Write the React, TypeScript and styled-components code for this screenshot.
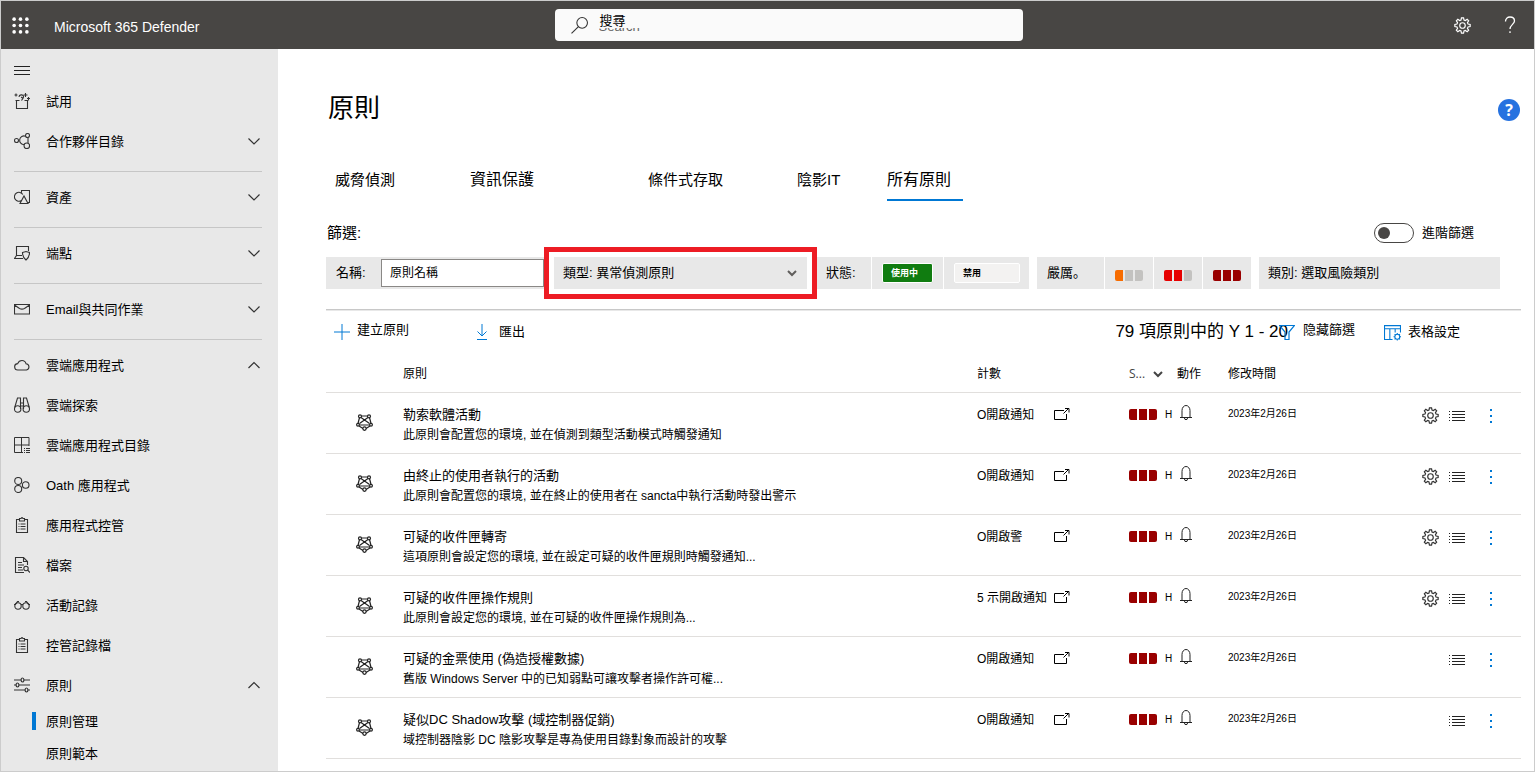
import React from "react";
import styled, { createGlobalStyle } from "styled-components";

const GlobalStyle = createGlobalStyle`
  *, *::before, *::after { box-sizing: border-box; }
  body {
    margin: 0;
    background: #fff;
    color: #000;
    font-family: "Liberation Sans", "Noto Sans CJK TC", sans-serif;
    font-size: 13px;
    line-height: 20px;
  }
  button, input { font: inherit; color: inherit; }
  button { margin: 0; padding: 0; border: 0; background: none; text-align: left; cursor: pointer; }
  a { color: inherit; text-decoration: none; }
  svg { display: block; flex: none; }
`;

const Frame = styled.div`
  display: flex;
  flex-direction: column;
  min-height: 100vh;
  border: 1px solid #ccc;
`;

const TopBar = styled.header`
  display: grid;
  grid-template-columns: 1fr minmax(200px, 468px) 1fr;
  align-items: center;
  height: 48px;
  background: #484644;
  color: #fff;
`;

const Brand = styled.div`
  display: flex;
  align-items: center;
  gap: 25px;
  padding-left: 11px;
  font-size: 14px;
`;

const BrandName = styled.span`
  padding-top: 4px;
`;

const SearchBox = styled.div`
  position: relative;
  display: flex;
  align-items: center;
  gap: 11px;
  height: 32px;
  padding: 0 16px;
  margin-right: -21px;
  margin-left: 21px;
  border-radius: 4px;
  background: #fafafa;
  color: #333;
`;

const SearchInput = styled.input`
  flex: 1;
  min-width: 0;
  height: 30px;
  padding: 2px 0 0;
  border: 0;
  outline: 0;
  background: transparent;
  &::placeholder { color: #666; opacity: 1; }
`;

const SearchLabel = styled.label`
  position: absolute;
  top: 3px;
  left: 44px;
  width: 48px;
  height: 16px;
  padding-left: 1px;
  line-height: 18px;
  background: #fafafa;
  color: #000;
`;

const TopActions = styled.div`
  display: flex;
  justify-content: flex-end;
  align-items: center;
  gap: 31px;
  padding-right: 16px;
`;

const Body = styled.div`
  display: flex;
  flex: 1;
`;

const Sidebar = styled.nav`
  flex: none;
  width: 277px;
  padding: 10px 16px 0 13px;
  background: #e8e8e8;
`;

const MenuToggle = styled.button`
  display: flex;
  align-items: center;
  width: 16px;
  height: 22px;
`;

const NavItem = styled.a`
  display: flex;
  align-items: center;
  gap: 16px;
  height: 40px;
  color: #000;
  svg { color: #333; }
`;

const NavLabel = styled.span`
  flex: 1;
  padding-top: 2px;
`;

const NavRule = styled.hr`
  height: 1px;
  margin: 10px 0 5px;
  border: 0;
  background: #c6c6c6;
`;

const SubItem = styled.a<{ $current?: boolean }>`
  display: flex;
  align-items: center;
  gap: 10px;
  height: 32px;
  padding-left: 18px;
  &::before {
    content: "";
    width: 4px;
    height: 18px;
    background: ${(p) => (p.$current ? "#0078d4" : "transparent")};
  }
  ${NavLabel} { padding-top: 2px; }
`;

const Main = styled.main`
  flex: 1;
  min-width: 0;
  padding: 40px 13px 0 48px;
`;

const TitleRow = styled.div`
  display: flex;
  align-items: center;
  justify-content: space-between;
  height: 40px;
`;

const Title = styled.h1`
  margin: 0;
  padding: 0 0 2px 2px;
  font-size: 26px;
  font-weight: 400;
  line-height: 36px;
`;

const HelpButton = styled.button`
  width: 22px;
  height: 22px;
  margin: 2px 1px 0 0;
  border-radius: 50%;
  background: #2672e0;
  color: #fff;
  font: 700 16px/22px "Open Sans", sans-serif;
  text-align: center;
`;

const Tabs = styled.div`
  display: grid;
  grid-template-columns: 135px 178px 149px 90px 76px;
  height: 44px;
  margin-top: 28px;
  padding-left: 9px;
`;

const Tab = styled.button<{ $large?: boolean; $selected?: boolean }>`
  padding-top: 4px;
  font-size: ${(p) => (p.$large ? 16 : 15)}px;
  border-bottom: 2px solid ${(p) => (p.$selected ? "#0078d4" : "transparent")};
`;

const FilterHead = styled.div`
  display: flex;
  align-items: center;
  justify-content: space-between;
  height: 20px;
  margin: 22px 47px 0 1px;
`;

const FilterTitle = styled.span`
  font-size: 15px;
`;

const Toggle = styled.label`
  display: flex;
  align-items: center;
  gap: 8px;
`;

const Switch = styled.input`
  appearance: none;
  display: flex;
  align-items: center;
  width: 40px;
  height: 20px;
  margin: 0;
  padding-left: 3px;
  border: 1px solid #484644;
  border-radius: 10px;
  background: #fff;
  &::before {
    content: "";
    width: 12px;
    height: 12px;
    border-radius: 50%;
    background: #484644;
  }
  &:checked { justify-content: flex-end; padding: 0 3px 0 0; }
`;

const Filters = styled.div`
  display: flex;
  height: 32px;
  margin: 14px 21px 0 0;
`;

const FilterGroup = styled.div<{ $gap?: number }>`
  display: flex;
  gap: 1px;
  margin-left: ${(p) => p.$gap ?? 0}px;
`;

const FilterCell = styled.div<{ $w: number; $pad?: number }>`
  display: flex;
  align-items: center;
  width: ${(p) => p.$w}px;
  padding-left: ${(p) => p.$pad ?? 10}px;
  background: #e8e8e8;
`;

const SeverityLabel = styled(FilterCell)`
  font-family: "Liberation Sans", "Noto Sans CJK JP", sans-serif;
`;

const NameField = styled.label`
  display: flex;
  align-items: center;
  width: 218px;
  padding-left: 10px;
  background: #e8e8e8;
`;

const NameText = styled.span`
  width: 45px;
`;

const NameInput = styled.input`
  width: 163px;
  height: 28px;
  padding: 0 8px;
  border: 1px solid #8a8886;
  background: #fff;
  font-size: 12px;
  &::placeholder { color: #000; opacity: 1; }
`;

const TypeFilter = styled.button`
  position: relative;
  display: flex;
  align-items: center;
  justify-content: space-between;
  width: 253px;
  margin: 0 10px;
  padding: 0 10px 0 9px;
  background: #e8e8e8;
  svg { color: #605e5c; }
  &::after {
    content: "";
    position: absolute;
    inset: -10px;
    border: 5px solid #ed1c24;
  }
`;

const StatePill = styled.button<{ $on?: boolean }>`
  width: ${(p) => (p.$on ? 51 : 66)}px;
  height: 20px;
  padding-left: 8px;
  border: 1px solid #fff;
  border-radius: 2px;
  background: ${(p) => (p.$on ? "#107c10" : "#f3f2f1")};
  color: ${(p) => (p.$on ? "#fff" : "#000")};
  font-size: 9px;
  font-weight: 700;
  line-height: 18px;
`;

const SeverityCell = styled.button`
  display: flex;
  justify-content: center;
  align-items: center;
  width: 48px;
  padding-top: 5px;
  background: #e8e8e8;
`;

const CategoryFilter = styled.button`
  flex: 1;
  margin-left: 8px;
  padding-left: 9px;
  background: #e8e8e8;
`;

const Toolbar = styled.div`
  display: flex;
  align-items: center;
  height: 45px;
  margin-top: 20px;
  padding: 0 61px 0 8px;
  border-top: 1px solid #c8c8c8;
  box-shadow: inset 0 1px 0 #e8e8e8;
`;

const Command = styled.button<{ $gap: number; $before?: number }>`
  display: flex;
  align-items: center;
  gap: ${(p) => p.$gap}px;
  margin-left: ${(p) => p.$before ?? 0}px;
`;

const Raised = styled.span`
  padding-bottom: 5px;
`;

const ResultCount = styled.span`
  margin-left: auto;
  font-size: 17px;
  white-space: nowrap;
`;

const Table = styled.table`
  width: 100%;
  border-collapse: collapse;
  table-layout: fixed;
`;

const Th = styled.th<{ $w?: number }>`
  width: ${(p) => (p.$w ? `${p.$w}px` : "auto")};
  height: 38px;
  padding: 3px 0 0;
  border-bottom: 1px solid #e1dfdd;
  font-size: 12px;
  font-weight: 400;
  text-align: left;
`;

const SortHead = styled.button`
  display: flex;
  align-items: center;
  gap: 8px;
  color: #444;
  font-family: "Open Sans", sans-serif;
`;

const Td = styled.td<{ $middle?: boolean; $top?: number }>`
  height: 61px;
  padding: ${(p) => (p.$middle ? 0 : p.$top ?? 12)}px 0 0;
  border-bottom: 1px solid #e1dfdd;
  vertical-align: ${(p) => (p.$middle ? "middle" : "top")};
`;

const Line = styled.div<{ $gap?: number }>`
  display: flex;
  align-items: center;
  gap: ${(p) => p.$gap ?? 0}px;
  height: 20px;
`;

const PolicyIcon = styled.div`
  display: flex;
  padding-left: 30px;
`;

const PolicyName = styled.a`
  display: block;
  line-height: 21px;
`;

const PolicyText = styled.div`
  font-size: 12px;
  line-height: 21px;
  white-space: nowrap;
`;

const CountText = styled.span`
  width: 77px;
  font-size: 12px;
  white-space: nowrap;
`;

const Level = styled.span`
  font-size: 10px;
`;

const DateText = styled.span`
  font-size: 10px;
`;

const RowActions = styled.div`
  display: flex;
  align-items: center;
  justify-content: flex-end;
  height: 24px;
  padding-right: 28px;
  color: #333;
`;

const RowButton = styled.button<{ $after?: number }>`
  margin-right: ${(p) => p.$after ?? 0}px;
`;

type IconProps = { size?: number; w?: number; box?: string; stroke?: number; children: React.ReactNode };

const Icon = ({ size = 16, w, box = "0 0 16 16", stroke = 1, children }: IconProps) => (
  <svg width={w ?? size} height={size} viewBox={box} fill="none" stroke="currentColor" strokeWidth={stroke} aria-hidden="true">
    {children}
  </svg>
);

const Chevron = ({ up }: { up?: boolean }) => (
  <Icon stroke={1.2}><path d={up ? "M2.500 11 8 5.500 13.500 11" : "M2.500 5.500 8 11l5.500-5.500"} /></Icon>
);

const BoldChevron = () => (
  <Icon size={10} box="0 0 10 10" stroke={2}><path d="M1 3l4 4 4-4" /></Icon>
);

const gearPath =
  "M7 .8h2l.4 2 1.300.55 1.700-1.150 1.400 1.400-1.150 1.700.55 1.300 2 .4v2l-2 .4-.55 1.300 1.150 1.700-1.400 1.400-1.700-1.150-1.300.55-.4 2H7l-.4-2-1.300-.55-1.700 1.150-1.400-1.400 1.150-1.700-.55-1.300-2-.4V7l2-.4.55-1.300L2.200 3.600l1.400-1.400 1.700 1.150L6.600 2.800z";

const Gear = ({ size = 17 }: { size?: number }) => (
  <Icon size={size} stroke={1.1}><path d={gearPath} /><circle cx="8" cy="8" r="2.600" /></Icon>
);

const icons: Record<string, React.ReactNode> = {
  trial: <Icon stroke={1.1}><path d="M2.500 7.500V15.500h11V7.500M1.500 7.500h4M10.500 7.500h4M5 4c0-2.500 4-3 4.500-.5.300 2-2.500 1.500-2 .2M9.500 3.500c.3 2-1.500 2.500-2 4M11.500 0v4M9.500 2h4M.5 2h3M2 .5v3M13 5.500h3M14.500 4v3" /></Icon>,
  partner: <Icon stroke={1.1}><circle cx="2.500" cy="7.500" r="2" /><circle cx="13.500" cy="2.500" r="2" /><circle cx="12.800" cy="12.800" r="2.800" /><path d="M11.500 3.200a4.300 4.300 0 1 0-1.300 8.300M14 4.500v5.500" /></Icon>,
  assets: <Icon stroke={1.1}><path d="M7.500 3.500v-2h8V13.500H14M6 14.500 10 7l4 7.500zM7.500 11.500A4.500 4.500 0 1 1 8.800 5.500" /></Icon>,
  endpoints: <Icon stroke={1.1}><path d="M9 13.500H.5l2-3h5.500M2.500 10.500v-9h12v4.500M8.500 7.500l3.500-1 3.500 1c0 4-1 5.500-3.500 7.500-2.500-2-3.500-3.500-3.500-7.500z" /></Icon>,
  mail: <Icon stroke={1.1}><path d="M.5 3.500h15v9.500H.5zM.5 4l5 3.500c2 1 3 1 5 0l5-3.500" /></Icon>,
  cloud: <Icon stroke={1.1}><path d="M4 13a3.200 3.200 0 0 1-.3-6.400C4.500 4.500 6 3.500 8 3.500c2.200 0 3.500 1.300 4 3.200A3.200 3.200 0 0 1 12.500 13z" /></Icon>,
  binoculars: <Icon stroke={1.1}><circle cx="3.700" cy="12" r="3.200" /><circle cx="12.300" cy="12" r="3.200" /><path d="M.7 10.500 3.500 1h3V12M15.300 10.500 12.500 1h-3V12M6.500 6h3M6.500 9h3" /></Icon>,
  catalog: <Icon><path d="M9 15.500H.5V.5h14.500V9M7.500.5v15M.5 8h14.500M10 11.500h1M12 11.500h4M10 13.500h1M12 13.500h4M10 15.500h1M12 15.500h4" /></Icon>,
  oauth: <Icon stroke={1.1}><circle cx="4.200" cy="4" r="3.500" /><circle cx="11.700" cy="8" r="3.300" /><circle cx="4.200" cy="12" r="3.500" /></Icon>,
  clipboard: <Icon stroke={1.1}><path d="M5.500 2.500h-3v13h11v-13h-3M5.500 1.500h1.500L8 .5l1 1h1.500v2.500h-5zM4.500 7h1M6.500 7h5M4.500 9.500h1M6.500 9.500h5M4.500 12h1M6.500 12h5" /></Icon>,
  file: <Icon stroke={1.1}><path d="M10 15.500H1.500V.5h8l4 4V8M9.500.5v4h4M4 5.500h4M4 8h6M4 10.500h4M4 13h5" /><circle cx="12" cy="11.500" r="2.200" /><path d="m13.500 13 2.500 2.500" /></Icon>,
  glasses: <Icon stroke={1.1}><circle cx="4" cy="9" r="3.200" /><circle cx="12" cy="9" r="3.200" /><path d="M7 7.500h2M0 7.500h1.500L3.500 4.500h1.500M16 7.500h-1.500L12.500 4.500h-1.500" /></Icon>,
  sliders: <Icon stroke={1.2}><path d="M0 3h7M10 3h6M0 8h2M5 8h11M0 13h11M14 13h2" /><ellipse cx="8.500" cy="3" rx="1.400" ry="2" /><ellipse cx="3.500" cy="8" rx="1.400" ry="2" /><ellipse cx="12.500" cy="13" rx="1.400" ry="2" /></Icon>,
};

type NavEntry = { label: string; icon: string; chevron?: "up" | "down"; rule?: boolean };

const navEntries: NavEntry[] = [
  { label: "試用", icon: "trial" },
  { label: "合作夥伴目錄", icon: "partner", chevron: "down", rule: true },
  { label: "資產", icon: "assets", chevron: "down", rule: true },
  { label: "端點", icon: "endpoints", chevron: "down", rule: true },
  { label: "Email與共同作業", icon: "mail", chevron: "down", rule: true },
  { label: "雲端應用程式", icon: "cloud", chevron: "up" },
  { label: "雲端探索", icon: "binoculars" },
  { label: "雲端應用程式目錄", icon: "catalog" },
  { label: "Oath 應用程式", icon: "oauth" },
  { label: "應用程式控管", icon: "clipboard" },
  { label: "檔案", icon: "file" },
  { label: "活動記錄", icon: "glasses" },
  { label: "控管記錄檔", icon: "clipboard" },
  { label: "原則", icon: "sliders", chevron: "up" },
];

const severityColors = { low: "#f76c00", medium: "#e60000", high: "#990000" };

const Severity = ({ level }: { level: keyof typeof severityColors }) => {
  const filled = { low: 1, medium: 2, high: 3 }[level];
  const fill = (n: number) => (n < filled ? severityColors[level] : "#c3c2c0");
  return (
    <svg width="28" height="11" viewBox="0 0 28 11" role="img" aria-label={level}>
      <path d="M2 0h6v11H2a2 2 0 0 1-2-2V2a2 2 0 0 1 2-2z" fill={fill(0)} />
      <path d="M10 0h8v11h-8z" fill={fill(1)} />
      <path d="M20 0h6a2 2 0 0 1 2 2v7a2 2 0 0 1-2 2h-6z" fill={fill(2)} />
    </svg>
  );
};

const AnomalyIcon = () => (
  <Icon size={17} box="0 0 17 17" stroke={1.2}>
    <path d="M5.500 2h6M3.500 3.500 2 9.500M13.500 3.500 15 9.500M3.500 11h10M3 12l4 2.500M14 12l-4 2.500M5 3.500l8.500 6M12 3.500l-8.500 6" stroke="#222" />
    <circle cx="4" cy="2.300" r="1.500" stroke="#222" />
    <circle cx="13" cy="2.300" r="1.500" stroke="#222" />
    <circle cx="2" cy="10.800" r="1.400" stroke="#222" />
    <circle cx="15" cy="10.800" r="1.400" stroke="#222" />
    <circle cx="8.500" cy="14.600" r="1.700" stroke="#222" />
  </Icon>
);

type Policy = { name: string; text: string; count: string; gear?: boolean };

const policies: Policy[] = [
  { name: "勒索軟體活動", text: "此原則會配置您的環境, 並在偵測到類型活動模式時觸發通知", count: "O開啟通知", gear: true },
  { name: "由終止的使用者執行的活動", text: "此原則會配置您的環境, 並在終止的使用者在 sancta中執行活動時發出警示", count: "O開啟通知", gear: true },
  { name: "可疑的收件匣轉寄", text: "這項原則會設定您的環境, 並在設定可疑的收件匣規則時觸發通知...", count: "O開啟警", gear: true },
  { name: "可疑的收件匣操作規則", text: "此原則會設定您的環境, 並在可疑的收件匣操作規則為...", count: "5 示開啟通知", gear: true },
  { name: "可疑的金票使用 (偽造授權數據)", text: "舊版 Windows Server 中的已知弱點可讓攻擊者操作許可權...", count: "O開啟通知" },
  { name: "疑似DC Shadow攻擊 (域控制器促銷)", text: "域控制器陰影 DC 陰影攻擊是專為使用目錄對象而設計的攻擊", count: "O開啟通知" },
];

const PolicyRow = ({ policy }: { policy: Policy }) => (
  <tr>
    <Td $middle><PolicyIcon><AnomalyIcon /></PolicyIcon></Td>
    <Td $top={11}>
      <PolicyName href="#">{policy.name}</PolicyName>
      <PolicyText>{policy.text}</PolicyText>
    </Td>
    <Td>
      <Line>
        <CountText>{policy.count}</CountText>
        <Icon><path d="M10 3.500H.5v9h12V7M9.500 6.500l5-5M11 1.500h4v4" stroke="#000" /></Icon>
      </Line>
    </Td>
    <Td>
      <Line $gap={8}>
        <Severity level="high" />
        <Level>H</Level>
      </Line>
    </Td>
    <Td $top={10}>
      <Line>
        <Icon w={18}><path d="M4 12.500V5.500a4 5 0 0 1 8 0V12.500M2 12.500h12M6.500 13a1.500 1.700 0 0 0 3 0" stroke="#222" /></Icon>
      </Line>
    </Td>
    <Td $top={11}><Line><DateText>2023年2月26日</DateText></Line></Td>
    <Td $top={11}>
      <RowActions>
        {policy.gear && <RowButton aria-label="設定" $after={10}><Gear /></RowButton>}
        <RowButton aria-label="清單" $after={24}>
          <Icon><path d="M3 3.500h13M3 6.500h13M3 9.500h13M3 12.500h13M0 3.500h1M0 6.500h1M0 9.500h1M0 12.500h1" stroke="#222" /></Icon>
        </RowButton>
        <RowButton aria-label="更多">
          <Icon w={4} box="0 0 4 16"><path d="M1 1h2v2H1zM1 7h2v2H1zM1 13h2v2H1z" fill="#0078d4" stroke="none" /></Icon>
        </RowButton>
      </RowActions>
    </Td>
  </tr>
);

const waffleDots = [2, 8, 14];

export default function App() {
  return (
    <>
      <GlobalStyle />
      <Frame>
        <TopBar>
          <Brand>
            <button aria-label="應用程式啟動器">
              <svg width="17" height="17" viewBox="0 0 16 16" fill="#fff">
                {waffleDots.map((y) => waffleDots.map((x) => <circle key={`${x}-${y}`} cx={x} cy={y} r="1.700" />))}
              </svg>
            </button>
            <BrandName>Microsoft 365 Defender</BrandName>
          </Brand>
          <SearchBox>
            <Icon size={17}><circle cx="10.500" cy="5.500" r="5" /><path d="M7 9 .5 15.500" /></Icon>
            <SearchInput id="search" placeholder="Search" />
            <SearchLabel htmlFor="search">搜尋</SearchLabel>
          </SearchBox>
          <TopActions>
            <button aria-label="設定"><Gear /></button>
            <button aria-label="說明">
              <Icon size={18} w={16} box="0 0 16 18" stroke={1.3}><path d="M3.500 5.500C3.500 2.500 5.500 1 8 1s4.500 1.500 4.500 4c0 3-4.500 4-4.500 8M8 15.200v1.800" /></Icon>
            </button>
          </TopActions>
        </TopBar>
        <Body>
          <Sidebar>
            <MenuToggle aria-label="功能表"><Icon><path d="M0 4.500h16M0 8.500h16M0 12.500h16" stroke="#222" /></Icon></MenuToggle>
            {navEntries.map((entry) => (
              <React.Fragment key={entry.label}>
                <NavItem href="#">
                  {icons[entry.icon]}
                  <NavLabel>{entry.label}</NavLabel>
                  {entry.chevron && <Chevron up={entry.chevron === "up"} />}
                </NavItem>
                {entry.rule && <NavRule />}
              </React.Fragment>
            ))}
            <SubItem href="#" $current><NavLabel>原則管理</NavLabel></SubItem>
            <SubItem href="#"><NavLabel>原則範本</NavLabel></SubItem>
          </Sidebar>
          <Main>
            <TitleRow>
              <Title>原則</Title>
              <HelpButton aria-label="說明">?</HelpButton>
            </TitleRow>
            <Tabs role="tablist">
              <Tab role="tab">威脅偵測</Tab>
              <Tab role="tab" $large>資訊保護</Tab>
              <Tab role="tab">條件式存取</Tab>
              <Tab role="tab">陰影IT</Tab>
              <Tab role="tab" $large $selected aria-selected>所有原則</Tab>
            </Tabs>
            <FilterHead>
              <FilterTitle>篩選:</FilterTitle>
              <Toggle><Switch type="checkbox" role="switch" />進階篩選</Toggle>
            </FilterHead>
            <Filters>
              <NameField>
                <NameText>名稱:</NameText>
                <NameInput placeholder="原則名稱" />
              </NameField>
              <TypeFilter>類型: 異常偵測原則<BoldChevron /></TypeFilter>
              <FilterGroup>
                <FilterCell $w={54} $pad={9}>狀態:</FilterCell>
                <FilterCell $w={71}><StatePill $on>使用中</StatePill></FilterCell>
                <FilterCell $w={85}><StatePill>禁用</StatePill></FilterCell>
              </FilterGroup>
              <FilterGroup $gap={8}>
                <SeverityLabel $w={67}>嚴厲。</SeverityLabel>
                <SeverityCell><Severity level="low" /></SeverityCell>
                <SeverityCell><Severity level="medium" /></SeverityCell>
                <SeverityCell><Severity level="high" /></SeverityCell>
              </FilterGroup>
              <CategoryFilter>類別: 選取風險類別</CategoryFilter>
            </Filters>
            <Toolbar>
              <Command $gap={7}>
                <Icon><path d="M8 0v16M0 8h16" stroke="#0078d4" /></Icon>
                <Raised>建立原則</Raised>
              </Command>
              <Command $gap={9} $before={65}>
                <Icon><path d="M8 0v12M3.500 7.500 8 12l4.500-4.500M3 15.500h10" stroke="#0078d4" /></Icon>
                匯出
              </Command>
              <ResultCount>79 項原則中的 Y 1 - 20</ResultCount>
              <Command $gap={8} $before={-9}>
                <Icon stroke={1.2}><path d="M.5 1.500h15L10 8v7.500H6V8z" stroke="#0078d4" /></Icon>
                <Raised>隐藏篩選</Raised>
              </Command>
              <Command $gap={7} $before={29}>
                <Icon size={17}><path d="M8 14.500H.5v-13h15V8M.5 4.500h15M5.500 4.500v10M10.500 4.500V8" stroke="#0078d4" /><circle cx="12.500" cy="12" r="2.300" stroke="#0078d4" /><path d="M12.500 8.500v1.200M12.500 14.300v1.200M9 12h1.200M14.800 12H16M10 9.500l.9.900M14.100 13.600l.9.900M15 9.500l-.9.900M10.900 13.600l-.9.900" stroke="#0078d4" /></Icon>
                表格設定
              </Command>
            </Toolbar>
            <Table>
              <thead>
                <tr>
                  <Th $w={77} />
                  <Th>原則</Th>
                  <Th $w={152}>計數</Th>
                  <Th $w={48}><SortHead>S...<BoldChevron /></SortHead></Th>
                  <Th $w={51}>動作</Th>
                  <Th $w={189}>修改時間</Th>
                  <Th $w={104} />
                </tr>
              </thead>
              <tbody>
                {policies.map((policy) => <PolicyRow key={policy.name} policy={policy} />)}
              </tbody>
            </Table>
          </Main>
        </Body>
      </Frame>
    </>
  );
}
